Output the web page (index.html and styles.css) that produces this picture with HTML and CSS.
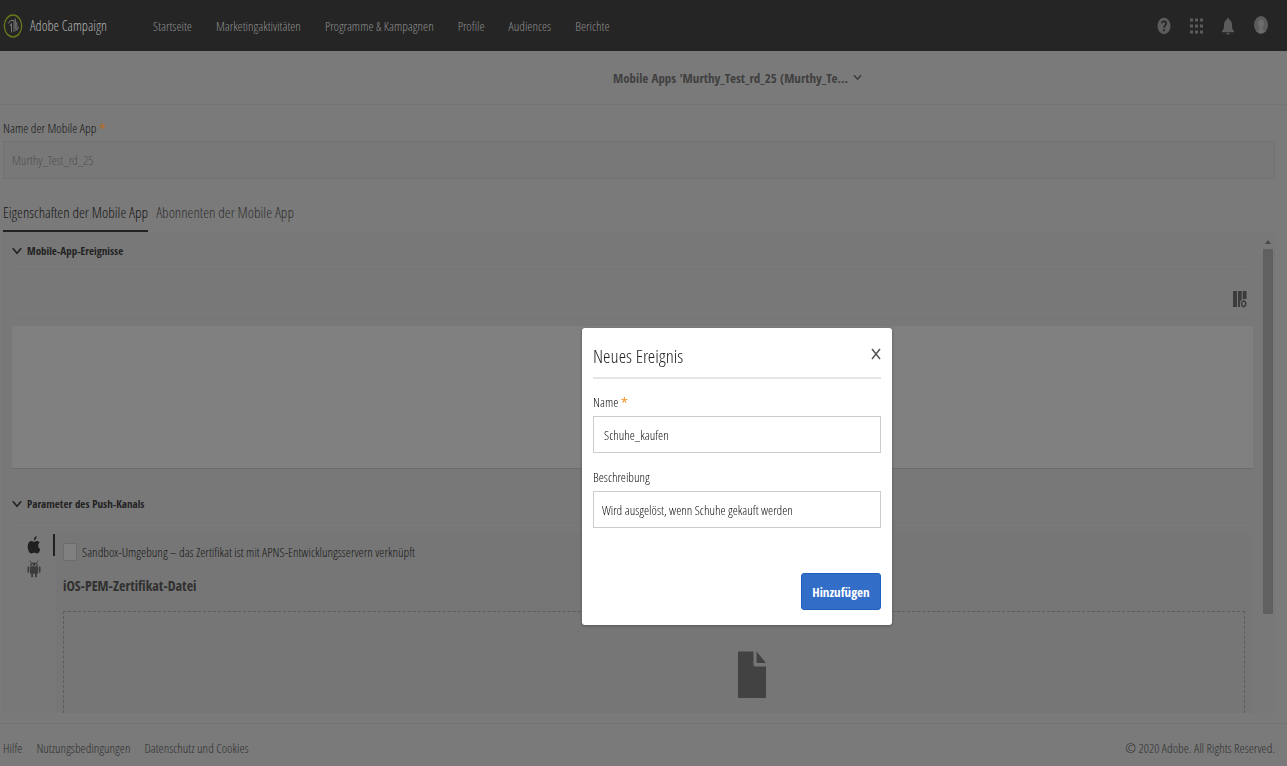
FILE: index.html
```html
<!DOCTYPE html>
<html lang="de">
<head>
<meta charset="utf-8">
<meta name="viewport" content="width=device-width, initial-scale=1">
<title>Adobe Campaign</title>
<link rel="stylesheet" href="styles.css">
</head>
<body>
<header class="topbar">
  <a class="brand" href="#">
    <svg class="brand-logo" width="20" height="24" viewBox="0 0 20 24" fill="none"><ellipse cx="10" cy="12" rx="8.7" ry="11" stroke="#66791c" stroke-width="1.3"/><path d="M5.500 9.500 7.500 6.500h3.500V10M7 12l1.500-2.500v9M11 10v8M12.300 4.500V15M13.800 8v6.500L12.500 16.500l2-1 1-3" stroke="#777" stroke-width="1"/></svg>
    <span>Adobe Campaign</span>
  </a>
  <nav class="nav">
    <a href="#">Startseite</a>
    <a href="#">Marketingaktivitäten</a>
    <a href="#">Programme &amp; Kampagnen</a>
    <a href="#">Profile</a>
    <a href="#">Audiences</a>
    <a href="#">Berichte</a>
  </nav>
  <div class="tools">
    <button type="button" aria-label="Hilfe"><svg width="14" height="18" viewBox="0 0 14 18"><ellipse cx="7" cy="9" rx="6.500" ry="8.300" fill="#5c5c5c"/><path d="M4.800 6.200C5 3.600 9.200 3.700 9.200 6.300c0 2-2.200 2.200-2.200 4.500M7 12.300v2" fill="none" stroke="#252525" stroke-width="1.700"/></svg></button>
    <button type="button" aria-label="Apps"><svg width="14" height="18" viewBox="0 0 14 18" fill="#5c5c5c"><path d="M1 1.500h3v3H1zM6 1.500h3v3H6zM11 1.500h3v3h-3zM1 7.500h3v3H1zM6 7.500h3v3H6zM11 7.500h3v3h-3zM1 13.500h3v3H1zM6 13.500h3v3H6zM11 13.500h3v3h-3z"/></svg></button>
    <button type="button" aria-label="Benachrichtigungen"><svg width="14" height="18" viewBox="0 0 14 18" fill="#5c5c5c"><path d="M7 1c.8 0 1.200.6 1.200 1.500C10.500 3.500 11 6 11 9c0 2.500.7 4 2 5v1.200H1V14c1.300-1 2-2.500 2-5 0-3 .5-5.500 2.800-6.500C5.800 1.600 6.200 1 7 1zM5.200 16h3.600c-.4 2-3.200 2-3.600 0z"/></svg></button>
    <button type="button" aria-label="Profil"><svg width="16" height="20" viewBox="0 0 16 20"><ellipse cx="8" cy="9" rx="7" ry="9" fill="#5c5c5c"/><path d="M8 3.500c2 0 3 1.500 3 4 0 1.800-.6 3-1.300 3.700v2l2.300 1.800C11 16.500 9.500 17 8 17s-3-.5-4-2l2.300-1.800v-2C5.600 10.500 5 9.300 5 7.500c0-2.500 1-4 3-4z" fill="#6c6c6c"/></svg></button>
  </div>
</header>

<div class="titlebar">
  <button type="button" class="title-button"><span>Mobile Apps 'Murthy_Test_rd_25 (Murthy_Te...</span><svg width="9" height="7" viewBox="0 0 9 7" fill="none" stroke="#3c3c3c" stroke-width="1.500"><path d="m1 1.200 3.500 4L8 1.200"/></svg></button>
</div>

<main class="main">
  <label class="label" for="app-name">Name der Mobile App <span class="required">*</span></label>
  <input class="app-name" id="app-name" value="Murthy_Test_rd_25" disabled>

  <div class="tabs" role="tablist">
    <button type="button" class="tab tab-active" role="tab" aria-selected="true">Eigenschaften der Mobile App</button>
    <button type="button" class="tab" role="tab" aria-selected="false">Abonnenten der Mobile App</button>
  </div>

  <div class="panel">
    <div class="panel-content">
      <section>
        <h2 class="section-title"><svg width="10" height="8" viewBox="0 0 10 8" fill="none" stroke="#222" stroke-width="1.600"><path d="m.8 1.200 4.200 5 4.200-5"/></svg>Mobile-App-Ereignisse</h2>
        <div class="toolbar">
          <button type="button" aria-label="Spalten konfigurieren"><svg width="14" height="18" viewBox="0 0 14 18"><path d="M0 1h4v16H0zM5 1h3.700v8.500L7 11.500V17H5zM9.700 1H13.500v8H9.700z" fill="#3c3c3c"/><ellipse cx="10.700" cy="13.700" rx="2" ry="2.500" fill="none" stroke="#3c3c3c" stroke-width="1.300"/><path d="M10.700 9.800v1.400m0 5v1.600M7.700 13.700h1m4 0h1M8.500 11l.8 1m2.800 3.400.8 1m0-5.400-.8 1m-2.800 3.400-.8 1" stroke="#3c3c3c"/></svg></button>
        </div>
        <div class="event-list"></div>
      </section>
      <section class="push">
        <h2 class="section-title"><svg width="10" height="8" viewBox="0 0 10 8" fill="none" stroke="#222" stroke-width="1.600"><path d="m.8 1.200 4.200 5 4.200-5"/></svg>Parameter des Push-Kanals</h2>
        <div class="channel">
          <div class="platforms">
            <button type="button" aria-label="iOS" class="platform-active"><svg width="14" height="20" viewBox="0 0 14 20" fill="#202020"><path d="M6.800 5.500C7 3 8 1.600 9.600 1c.1 2.300-1 4-2.800 4.500zM7 6.800c.9 0 1.700-.8 3-.8 1.200 0 2.100.6 2.700 1.600-2.200 1.600-1.900 5.300.6 6.600-.6 2-1.900 4.300-3.200 4.300-1 0-1.600-.7-2.900-.7s-1.900.7-2.800.7C2.500 18.500.7 15 .7 11.500.7 8 2.500 6 4.300 6c1.100 0 1.900.8 2.700.8z"/></svg></button>
            <button type="button" aria-label="Android"><svg width="14" height="20" viewBox="0 0 14 20" fill="#3c3c3c"><path d="M3 6.500C3.200 4.800 4.600 3.500 7 3.500s3.800 1.300 4 3zM3 7.300h8v7.500H9.800v3.500H8v-3.500H6v3.500H4.200v-3.500H3zM.5 8c0-1 1.700-1 1.700 0v5c0 1-1.700 1-1.700 0zM11.800 8c0-1 1.700-1 1.700 0v5c0 1-1.700 1-1.700 0z"/><path d="m3 1.500 1.500 3m6.500-3-1.500 3" stroke="#3c3c3c" stroke-width=".8"/><path d="M5 5h1v1H5zM8.200 5h1v1h-1z" fill="#777"/></svg></button>
          </div>
          <div class="certificate">
            <label class="sandbox"><input type="checkbox">Sandbox-Umgebung – das Zertifikat ist mit APNS-Entwicklungsservern verknüpft</label>
            <h3>iOS-PEM-Zertifikat-Datei</h3>
            <div class="dropzone">
              <svg width="28" height="48" viewBox="0 0 28 48" fill="#424242"><path d="M1 .5h14.500V13c0 1.800.8 2.500 2 2.500H28V47H1q-1 0-1-1V1.500Q0 .5 1 .5zM18.500.5 28 12H18.500z"/></svg>
            </div>
          </div>
        </div>
      </section>
    </div>
    <div class="scrollbar" aria-hidden="true">
      <svg width="6" height="4" viewBox="0 0 6 4" fill="#484848"><path d="m3 0 3 4H0z"/></svg>
      <div class="scroll-thumb"></div>
    </div>
  </div>
</main>

<footer class="footer">
  <a href="#">Hilfe</a>
  <a href="#">Nutzungsbedingungen</a>
  <a href="#">Datenschutz und Cookies</a>
  <span class="copyright">© 2020 Adobe. All Rights Reserved.</span>
</footer>

<div class="modal-layer">
  <form class="dialog" role="dialog" aria-labelledby="dialog-title">
    <div class="dialog-head">
      <h1 id="dialog-title">Neues Ereignis</h1>
      <button type="button" class="close" aria-label="Schließen"><svg width="10" height="12" viewBox="0 0 10 12" fill="none" stroke="#555" stroke-width="1.500"><path d="m1 1 8 10M9 1 1 11"/></svg></button>
    </div>
    <label class="label" for="event-name">Name <span class="required">*</span></label>
    <input class="field field-name" id="event-name" value="Schuhe_kaufen">
    <label class="label label-next" for="event-description">Beschreibung</label>
    <input class="field" id="event-description" value="Wird ausgelöst, wenn Schuhe gekauft werden">
    <button type="button" class="primary">Hinzufügen</button>
  </form>
</div>
</body>
</html>
```
FILE: styles.css
```css
* { box-sizing: border-box; }
body {
  margin: 0;
  height: 100vh;
  display: flex;
  flex-direction: column;
  overflow: hidden;
  background: #7a7a7a;
  color: #161616;
  font: 13px/18px "Open Sans Condensed Light", "Roboto Condensed", "Open Sans", sans-serif;
}
h1, h2, h3 { margin: 0; }
button, input { font: inherit; color: inherit; }
button { padding: 0; border: 0; background: none; cursor: pointer; }
a { color: inherit; text-decoration: none; }
svg { display: block; flex: none; }

.topbar {
  flex: none;
  display: flex;
  align-items: center;
  height: 51px;
  padding: 0 18px 0 3px;
  background: #252525;
  color: #8c8c8c;
}
.brand { display: flex; align-items: center; gap: 7px; width: 150px; font-size: 14px; color: #b0b0b0; }
.nav { display: flex; gap: 24px; }
.tools { display: flex; align-items: center; gap: 18px; margin-left: auto; }

.titlebar {
  flex: none;
  display: flex;
  justify-content: center;
  height: 54px;
  padding-left: 188px;
  border-bottom: 1px solid #757575;
}
.title-button, .section-title, .certificate h3, .primary { font-family: "Open Sans Condensed", "Roboto Condensed", "Open Sans", sans-serif; font-weight: bold; }
.title-button { display: flex; align-items: center; gap: 5px; font-size: 13px; color: #404040; }

.main { flex: 1; min-height: 0; display: flex; flex-direction: column; padding: 14px 12px 0 3px; }
.label { display: block; }
.required { font-family: "Open Sans", sans-serif; line-height: 1; color: #c06a14; }
.app-name {
  flex: none;
  width: 100%;
  height: 38px;
  margin-top: 4px;
  padding: 0 8px;
  border: 1px solid #727272;
  background: #787878;
  color: #505050;
}
.tabs { flex: none; display: flex; gap: 8px; height: 53px; padding-top: 14px; }
.tab { font-size: 15px; color: #303030; border-bottom: 2px solid transparent; }
.tab-active { color: #161616; border-color: #222; }

.panel { flex: 1; min-height: 0; display: flex; border: 1px solid #767676; border-bottom: 0; background: #787878; }
.panel-content { flex: 1; display: flex; flex-direction: column; padding: 0 9px 0 8px; overflow: hidden; }
.section-title {
  display: flex;
  align-items: center;
  gap: 5px;
  height: 37px;
  font-size: 11px;
  color: #222;
  border-bottom: 1px solid #757575;
}
.toolbar { display: flex; align-items: center; justify-content: flex-end; height: 49px; padding: 10px 6px 0 0; border-bottom: 1px solid #757575; }
.event-list { height: 143px; margin-top: 7px; background: #808080; border-bottom: 1px solid #6c6c6c; }
.push { flex: 1; display: flex; flex-direction: column; padding-top: 17px; }
.channel { flex: 1; display: flex; margin-top: 11px; }
.platforms { flex: none; display: flex; flex-direction: column; gap: 2px; width: 43px; padding-left: 15px; }
.platforms button { height: 22px; }
.platform-active { border-right: 2px solid #202020; }
.certificate { flex: 1; display: flex; flex-direction: column; padding: 7px 8px 0 8px; background: #767676; }
.sandbox { display: flex; align-items: center; gap: 5px; height: 22px; }
.sandbox input { appearance: none; width: 14px; height: 18px; margin: 0; border: 1px solid #6c6c6c; background: #808080; }
.certificate h3 { height: 48px; padding-top: 13px; font-size: 14px; line-height: 20px; color: #303030; }
.dropzone { flex: 1; display: flex; justify-content: center; padding: 39px 0 0 196px; border: 1px dashed #5c5c5c; border-bottom: 0; }

.scrollbar { flex: none; display: flex; flex-direction: column; align-items: center; gap: 5px; width: 12px; padding: 7px 1px 0 0; }
.scroll-thumb { width: 10px; height: 365px; background: #606060; }

.footer { flex: none; display: flex; gap: 14px; height: 43px; margin-top: 10px; padding: 15px 12px 0 3px; border-top: 1px solid #747474; color: #303030; }
.copyright { margin-left: auto; }

.modal-layer { position: fixed; inset: 0; display: grid; place-items: center; padding: 187px 0 0 187px; }
.dialog { display: flex; flex-direction: column; width: 310px; padding: 12px 11px 15px; border-radius: 3px; background: #fff; box-shadow: 0 1px 3px #555; color: #111; }
.dialog-head { display: flex; align-items: flex-start; justify-content: space-between; height: 39px; margin-bottom: 14px; border-bottom: 2px solid #e5e5e5; }
.dialog h1 { font-size: 19px; line-height: 32px; font-weight: normal; color: #222; }
.close { padding-top: 8px; }
.dialog .required { color: #f28a14; }
.field { width: 100%; height: 37px; margin-top: 5px; padding: 0 8px; border: 1px solid #ccc; background: #fff; }
.field-name { padding-left: 10px; }
.label-next { margin-top: 15px; }
.primary { align-self: flex-end; width: 80px; height: 37px; margin-top: 45px; border: 1px solid #1f5fbd; border-radius: 3px; background: #326ec8; color: #fff; font-size: 13px; }
```
